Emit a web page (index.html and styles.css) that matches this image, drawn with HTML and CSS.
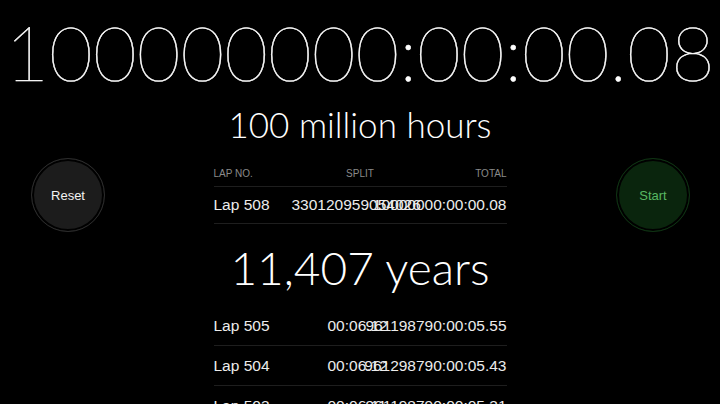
FILE: index.html
```html
<!DOCTYPE html>
<html>
<head>
<meta charset="utf-8">
<link rel="stylesheet" href="styles.css">
</head>
<body>
<div class="timer">100000000:00:00.08</div>
<div class="stage">
  <div class="side side-left">
    <div class="btn btn-reset"><span>Reset</span></div>
  </div>
  <div class="center">
    <div class="caption caption-hours">100 million hours</div>
    <div class="head">
      <span class="h-lap">LAP NO.</span>
      <span class="h-split">SPLIT</span>
      <span class="h-total">TOTAL</span>
    </div>
    <div class="row row-first">
      <span class="lap">Lap 508</span>
      <div class="times times-wide">
        <span class="split">330120959054026</span>
        <span class="total">10000000:00:00.08</span>
      </div>
    </div>
    <div class="caption caption-years">11,407 years</div>
    <div class="row">
      <span class="lap">Lap 505</span>
      <div class="times">
        <span class="split">00:06.12</span>
        <span class="total">961198790:00:05.55</span>
      </div>
    </div>
    <div class="row">
      <span class="lap">Lap 504</span>
      <div class="times">
        <span class="split">00:06.12</span>
        <span class="total">961298790:00:05.43</span>
      </div>
    </div>
    <div class="row">
      <span class="lap">Lap 503</span>
      <div class="times">
        <span class="split">00:06.11</span>
        <span class="total">961198790:00:05.31</span>
      </div>
    </div>
  </div>
  <div class="side side-right">
    <div class="btn btn-start"><span>Start</span></div>
  </div>
</div>
</body>
</html>
```
FILE: styles.css
```css
html, body {
  margin: 0;
  padding: 0;
  background: #000;
  width: 720px;
  height: 404px;
  overflow: hidden;
}
body {
  color: #fff;
  font-family: "Liberation Sans", Arial, sans-serif;
}
.timer {
  font-family: Lato, "DejaVu Sans", sans-serif;
  font-weight: 100;
  font-size: 75.5px;
  line-height: 80px;
  text-align: center;
  white-space: nowrap;
  padding-top: 12px;
  height: 88px;
  -webkit-text-stroke: 0.5px #fff;
}
.stage {
  display: grid;
  grid-template-columns: 1fr 293px 1fr;
}
.side {
  display: flex;
  padding-top: 58px;
}
.side-left { justify-content: flex-start; padding-left: 31px; }
.side-right { justify-content: flex-end; padding-right: 30px; }
.btn {
  width: 74px;
  height: 74px;
  border-radius: 50%;
  box-sizing: border-box;
  display: flex;
  align-items: center;
  justify-content: center;
  font-size: 13px;
}
.btn-reset {
  background: #1c1c1c;
  border: 1px solid #2c2c2c;
  box-shadow: inset 0 0 0 2px #000;
  color: #f2f2f2;
}
.btn-start {
  background: #0a250d;
  border: 1px solid #0f3313;
  box-shadow: inset 0 0 0 2px #000;
  color: #58b862;
}
.caption {
  font-family: Lato, "DejaVu Sans", sans-serif;
  font-weight: 300;
  text-align: center;
  white-space: nowrap;
}
.caption-hours {
  font-size: 35px;
  line-height: 48px;
  height: 60px;
}
.caption-years {
  box-sizing: border-box;
  font-size: 46px;
  line-height: 56px;
  padding-top: 16px;
  height: 82px;
}
.head {
  display: grid;
  grid-template-columns: 1fr auto 1fr;
  font-size: 10px;
  color: #8a8a8a;
  height: 26px;
  align-items: center;
  border-bottom: 1px solid #1e1e1e;
}
.h-split { text-align: center; }
.h-total { text-align: right; }
.row {
  display: flex;
  align-items: center;
  height: 39px;
  border-bottom: 1px solid #1e1e1e;
  font-size: 15.5px;
  color: #ececec;
}
.row-first { height: 36px; }
.lap { width: 114px; flex: none; }
.times {
  flex: 1;
  display: grid;
}
.times-wide { margin-left: -36px; }
.split, .total {
  grid-area: 1 / 1;
  white-space: nowrap;
}
.split { justify-self: start; }
.total { justify-self: end; }
```
